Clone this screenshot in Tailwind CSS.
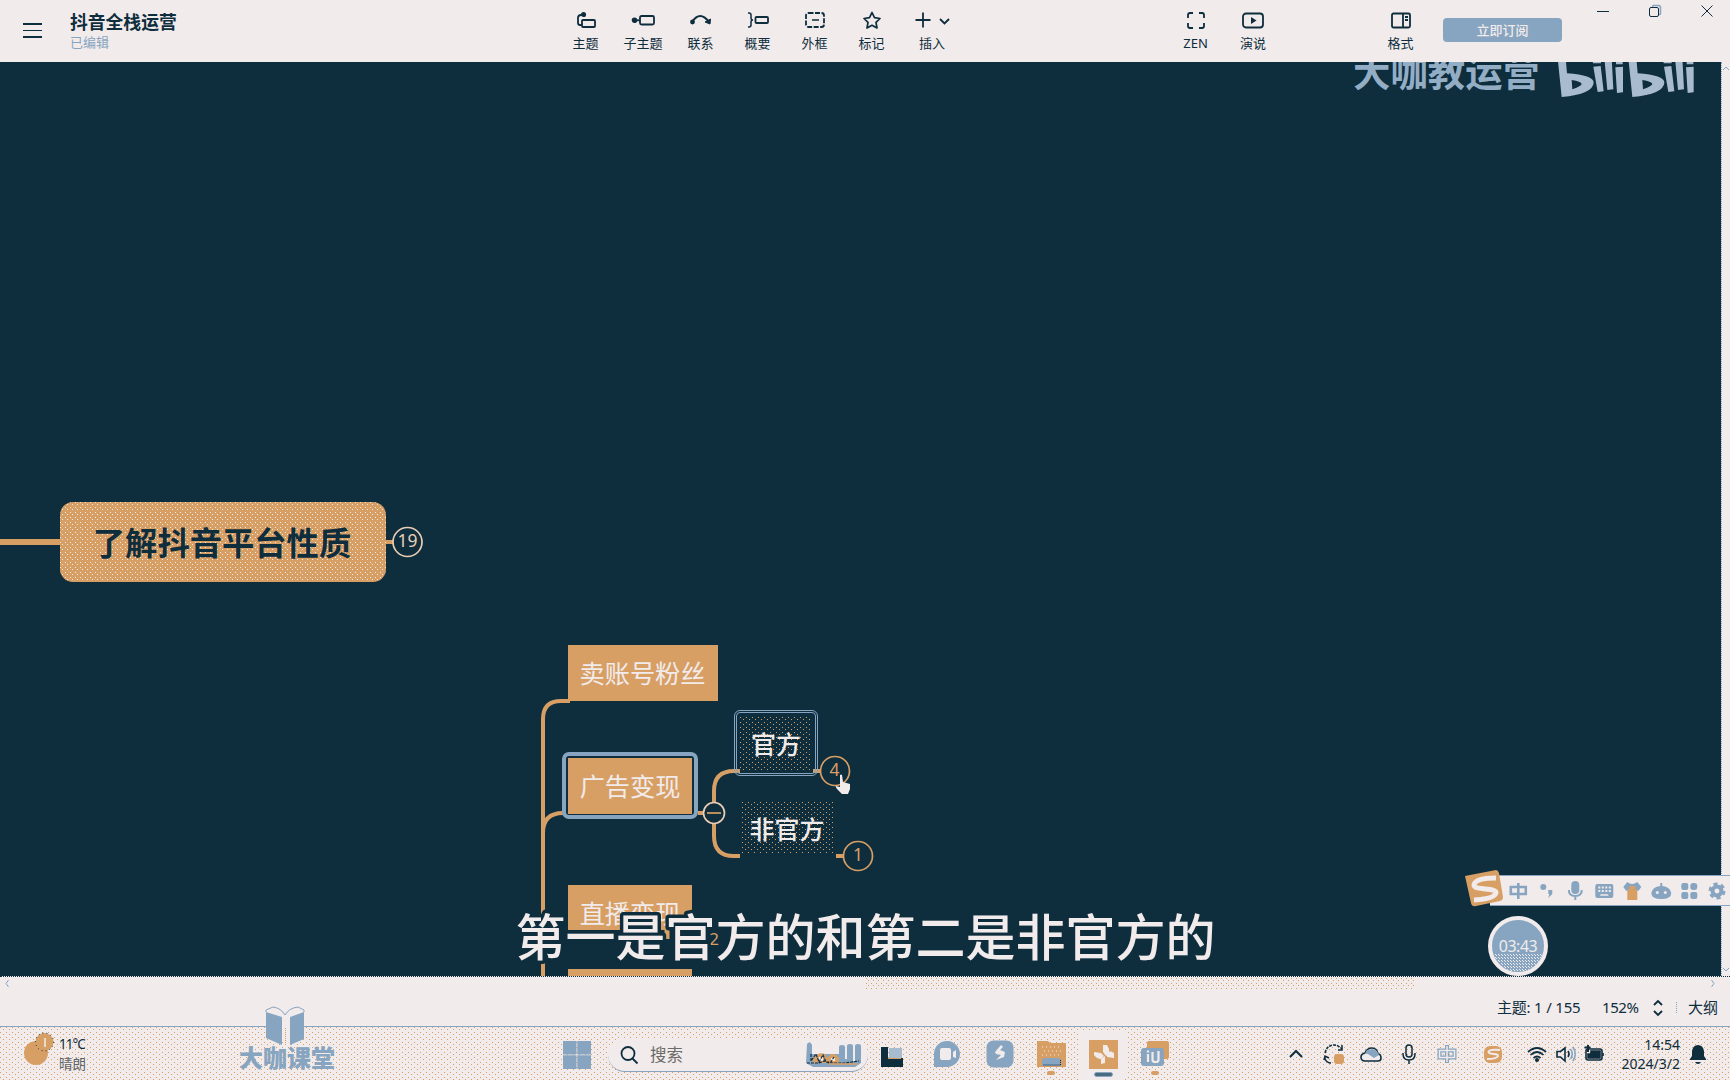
<!DOCTYPE html>
<html lang="zh-CN">
<head>
<meta charset="utf-8">
<title>抖音全栈运营</title>
<script src="https://cdn.jsdelivr.net/npm/@tailwindcss/browser@4"></script>
</head>
<body class="w-[1730px] h-[1080px] overflow-hidden flex flex-col bg-[#f1ebeb] text-[#0e2d3d] font-['Noto_Sans','Noto_Sans_CJK_SC',sans-serif] leading-none">

<!-- Title bar and toolbar -->
<header class="h-[62px] shrink-0 flex items-start">
  <button class="ml-[23px] mt-[23px] w-[19px] shrink-0 flex flex-col gap-[5px]"><i class="block h-[1.5px] w-[19px] bg-[#0e2d3d]"></i><i class="block h-[1.5px] w-[19px] bg-[#0e2d3d]"></i><i class="block h-[2px] w-[19px] bg-[#0e2d3d]"></i></button>
  <div class="ml-[28px] mt-[13px] w-[487px] shrink-0 flex flex-col gap-[4px]">
    <h1 class="text-[17.8px] leading-[19px] font-bold">抖音全栈运营</h1>
    <span class="text-[13px] leading-[13px] text-[#87a5c0]">已编辑</span>
  </div>
  <nav class="shrink-0 flex pt-[9px] text-[13px]">
    <div class="w-[57px] flex flex-col items-center gap-[6px]">
      <svg class="w-6 h-[22px]" viewBox="0 0 24 22" fill="none" stroke="currentColor" stroke-width="1.8"><rect x="8" y="11" width="13" height="7" rx="1"/><path d="M8 16H6q-2 0-2-2V9q0-3 3-3h2"/><circle cx="9.500" cy="5.500" r="1.700" fill="currentColor"/></svg>主题</div>
    <div class="w-[58px] flex flex-col items-center gap-[6px]">
      <svg class="w-6 h-[22px]" viewBox="0 0 24 22" fill="none" stroke="currentColor" stroke-width="1.800"><rect x="9" y="7" width="14" height="8.500" rx="1.500"/><path d="M3 11.300h6"/><circle cx="3.500" cy="11.300" r="1.900" fill="currentColor"/></svg>子主题</div>
    <div class="w-[57px] flex flex-col items-center gap-[6px]">
      <svg class="w-6 h-[22px]" viewBox="0 0 24 22" fill="none" stroke="currentColor" stroke-width="1.800"><path d="M3 13Q11 1 20 13"/><circle cx="3.500" cy="13" r="1.500" fill="currentColor"/><path d="m16 13 5 2 .5-5z" fill="currentColor" stroke-width="1"/></svg>联系</div>
    <div class="w-[57px] flex flex-col items-center gap-[6px]">
      <svg class="w-6 h-[22px]" viewBox="0 0 24 22" fill="none" stroke="currentColor" stroke-width="1.800"><path d="M2 4h1q2 0 2 2v3q0 2 2 2-2 0-2 2v3q0 2-2 2H2" stroke-width="1.500"/><rect x="9.500" y="8" width="12.500" height="6" rx="1"/></svg>概要</div>
    <div class="w-[57px] flex flex-col items-center gap-[6px]">
      <svg class="w-6 h-[22px]" viewBox="0 0 24 22" fill="none" stroke="currentColor" stroke-width="1.800"><rect x="3" y="4" width="18" height="14" rx="2.500" stroke-dasharray="5 1.500"/><path d="M9 11h7" stroke-width="1.500"/></svg>外框</div>
    <div class="w-[57px] flex flex-col items-center gap-[6px]">
      <svg class="w-6 h-[22px]" viewBox="0 0 24 22" fill="none" stroke="currentColor" stroke-width="1.700" stroke-linejoin="round"><path d="m12 3.500 2.500 5.200 5.500.8-4 3.900 1 5.600-5-2.700L7 19l1-5.600-4-3.900 5.500-.8z"/></svg>标记</div>
    <div class="w-[64px] flex flex-col items-center gap-[6px]">
      <svg class="w-9 h-[22px]" viewBox="0 0 36 22" fill="none" stroke="currentColor" stroke-width="1.800"><path d="M9 3.500v15M1.500 11h15M26 10l4.500 4.500L35 10"/></svg>插入</div>
  </nav>
  <nav class="ml-[203px] shrink-0 flex pt-[9px] text-[13px]">
    <div class="w-[57px] flex flex-col items-center gap-[6px]">
      <svg class="w-6 h-[22px]" viewBox="0 0 24 22" fill="none" stroke="currentColor" stroke-width="1.800"><path d="M4 9V6q0-2 2-2h3M15 4h3q2 0 2 2v3M20 14v3q0 2-2 2h-3M9 19H6q-2 0-2-2v-3"/></svg>ZEN</div>
    <div class="w-[58px] flex flex-col items-center gap-[6px]">
      <svg class="w-6 h-[22px]" viewBox="0 0 24 22" fill="none" stroke="currentColor" stroke-width="1.800"><rect x="2" y="4.500" width="20" height="14" rx="3"/><path d="m10 8 5.500 3.500L10 15z" fill="currentColor" stroke="none"/></svg>演说</div>
  </nav>
  <div class="ml-[90px] pt-[9px] w-[57px] shrink-0 flex flex-col items-center gap-[6px] text-[13px]">
    <svg class="w-6 h-[22px]" viewBox="0 0 24 22" fill="none" stroke="currentColor" stroke-width="1.800"><rect x="3" y="4.500" width="18" height="14" rx="1.500"/><path d="M14 4.500v14M16 8h3m-3 3h3"/></svg>格式</div>
  <button class="ml-[14px] mt-[18px] w-[119px] h-6 shrink-0 rounded-[4px] bg-[#87a5c0] text-[#f1ebeb] text-[13px] font-medium leading-6">立即订阅</button>
  <div class="ml-[15px] shrink-0 flex">
    <svg class="w-[52px] h-[22px]" viewBox="0 0 52 22" fill="none" stroke="currentColor"><path d="M20 11.500h12"/></svg>
    <svg class="w-[52px] h-[22px]" viewBox="0 0 52 22" fill="none" stroke="currentColor"><path d="M23.500 7.500V6.500q0-1 1-1h5q2 0 2 2v6q0 1-1 1h-1" stroke="#87a5c0" stroke-width="1.500"/><rect x="20.500" y="7.500" width="9" height="9" rx="1.500"/></svg>
    <svg class="w-[46px] h-[22px]" viewBox="0 0 46 22" fill="none" stroke="currentColor"><path d="m20.500 5.500 11 11m0-11-11 11"/></svg>
  </div>
</header>

<!-- Mind map canvas -->
<main class="h-[914px] shrink-0 relative overflow-hidden">
 <div class="absolute left-0 -top-[62px] w-[1730px] h-[1080px]">
  <div class="absolute left-0 top-[62px] w-[1721px] h-[914px] bg-[#0e2d3d]"></div>
  <svg class="absolute left-0 top-0 w-[1730px] h-[1080px]" viewBox="0 0 1730 1080" fill="none" stroke="#d89f65" stroke-width="4">
    <path d="M0 542h60" stroke-width="6"/><path d="M386 542h7"/>
    <path d="M570 701h-9q-18 0-18 18V976M543 833q0-20 20-20"/>
    <path d="M698 813h6M714 802V791q0-20 20-20h6M714 824v12q0 20 20 20h6M813 771h7M836 856h7"/>
    <path d="M667 929v10" stroke-width="5"/>
    <g stroke-width="1.700" fill="#0e2d3d"><circle cx="407.500" cy="542" r="14.500" stroke="#e9cdb4"/><circle cx="714" cy="813" r="10.500" stroke="#e9cdb4"/><circle cx="835" cy="771" r="14.500"/><circle cx="858" cy="856" r="14.500"/><path d="M707 813h14"/></g>
  </svg>
  <div class="absolute left-[60px] top-[502px] w-[326px] h-[80px] rounded-[13px] bg-[#d89f65] bg-[radial-gradient(circle_at_0.5px_0.5px,#f1ebeb_0.6px,transparent_0.7px),radial-gradient(circle_at_2.5px_2.5px,#f1ebeb_0.6px,transparent_0.7px)] bg-[length:5px_5px] flex items-center justify-center pr-[2px] text-[32.3px] font-bold">了解抖音平台性质</div>
  <div class="absolute left-[392px] top-[526px] w-[31px] h-[30px] flex items-center justify-center text-[17.500px] text-[#e9cdb4]">19</div>
  <div class="absolute left-[568px] top-[645px] w-[150px] h-[56px] bg-[#d89f65] text-[#f1ebeb] flex items-center justify-center pr-[1px] pt-[2px] text-[25.200px]">卖账号粉丝</div>
  <div class="absolute left-[562px] top-[752px] w-[136px] h-[67px] rounded-[7px] border-4 border-[#87a5c0]"></div>
  <div class="absolute left-[568px] top-[758px] w-[124px] h-[56px] bg-[#d89f65] text-[#f1ebeb] flex items-center justify-center pt-[2px] text-[25.200px]">广告变现</div>
  <div class="absolute left-[734px] top-[710px] w-[84px] h-[66px] rounded-[6px] border-[3px] border-double border-[#87a5c0]"></div>
  <div class="absolute left-[740px] top-[717px] w-[72px] h-[54px] bg-[radial-gradient(circle_at_0.5px_0.5px,#d89f65_0.6px,transparent_0.7px),radial-gradient(circle_at_3.5px_2.5px,#d89f65_0.6px,transparent_0.7px)] bg-[length:6px_5px] text-[#f1ebeb] flex items-center justify-center text-[25px] font-medium"><span>官方</span></div>
  <div class="absolute left-[742px] top-[802px] w-[93px] h-[51px] bg-[radial-gradient(circle_at_0.5px_0.5px,#d89f65_0.6px,transparent_0.7px),radial-gradient(circle_at_3.5px_2.5px,#d89f65_0.6px,transparent_0.7px)] bg-[length:6px_5px] text-[#f1ebeb] flex items-center justify-center pr-[3px] pt-[3px] text-[25px] font-medium">非官方</div>
  <div class="absolute left-[820px] top-[755px] w-[29px] h-[30px] flex items-center justify-center text-[17.500px] text-[#d89f65]">4</div>
  <div class="absolute left-[843px] top-[840px] w-[30px] h-[30px] flex items-center justify-center text-[17.500px] text-[#d89f65]">1</div>
  <svg class="absolute left-[834px] top-[773px] w-[18px] h-[22px]" viewBox="0 0 18 22" fill="#f1ebeb"><path d="M6 2q1.500-1 2 0l1 7 7 2v5l-2 5H8l-5-5q-2-3-1-3l4 1z"/></svg>
  <div class="absolute left-[568px] top-[885px] w-[124px] h-[45px] bg-[#d89f65] text-[#f1ebeb] flex items-center justify-center pt-[12px] text-[25.200px]">直播变现</div>
  <div class="absolute left-[568px] top-[969px] w-[124px] h-[10px] bg-[#d89f65]"></div>
  <div class="absolute left-[706px] top-[929px] w-4 h-5 text-center leading-5 text-[17px] text-[#d89f65]">2</div>
  <!-- Video caption with a dark outline -->
  <svg class="absolute left-[500px] top-[895px] w-[730px] h-[81px]" viewBox="0 0 730 81"><text x="15.500" y="60.500" textLength="700" class="text-[50px] font-medium font-['Noto_Sans_CJK_SC',sans-serif]" fill="#f1ebeb" stroke="#0e2d3d" stroke-width="7" stroke-linejoin="round" paint-order="stroke">第一是官方的和第二是非官方的</text></svg>
  <!-- Channel watermark -->
  <div class="absolute left-[1353px] top-[54px] text-[37.400px] leading-[38px] font-bold text-[#93adc5]">大咖教运营</div>
  <svg class="absolute left-[1545px] top-[58px] w-[185px] h-[50px]" viewBox="0 0 555 150"><g id="bili"><path fill-rule="evenodd" d="M38 0h24l4 46q80 6 80 28-2 34-96 43zM80 66l2 28q28-10 28-16-2-8-30-12z" fill="#a9bbce"/><path d="M145 26l22-2 9 76-18 2zM178 0h22l5 94-18 2zM211 28l23-2v77l-18 2zM142 4h26v12h-24zM213 4h20v15h-20z" fill="#a9bbce"/></g><use href="#bili" x="212"/></svg>
  <!-- Timer -->
  <div class="absolute left-[1488px] top-[916px] w-[60px] h-[60px] rounded-full border-4 border-[#f1ebeb] bg-[#87a5c0] overflow-hidden flex items-center justify-center text-[16px] text-[#f1ebeb]">
    <div class="absolute left-0 bottom-0 w-full h-[18px] bg-[radial-gradient(circle_at_0.5px_0.5px,#f1ebeb_0.6px,transparent_0.7px),radial-gradient(circle_at_1.5px_1.5px,#f1ebeb_0.6px,transparent_0.7px)] bg-[length:3px_3px]"></div><span class="relative tracking-[-0.5px]">03:43</span></div>
  <!-- Vertical scrollbar -->
  <div class="absolute left-[1721px] top-[62px] w-[9px] h-[914px] bg-[#f1ebeb] border-l border-dotted border-[#87a5c0]"></div>
  <svg class="absolute left-[1721px] top-[62px] w-[9px] h-[914px]" viewBox="0 0 9 914" fill="none" stroke="#87a5c0"><path d="M2 8l3-3 3 3M2 906l3 3 3-3"/></svg>
  <!-- Input method bar -->
  <div class="absolute left-[1490px] top-[875px] w-[240px] h-[31px] bg-[#f1ebeb] border-y border-[#87a5c0] flex items-center pl-[14px] text-[#87a5c0]">
    <svg class="w-[28.600px] h-6" viewBox="0 0 28 24" fill="none" stroke="currentColor" stroke-width="2.600"><path d="M6.500 8h15v7h-15zM14 4v16"/></svg>
    <svg class="w-[28.600px] h-6" viewBox="0 0 28 24" fill="currentColor"><circle cx="10" cy="8" r="3"/><path d="M15 11h4v4l-4 4 1-4h-1z"/></svg>
    <svg class="w-[28.600px] h-6" viewBox="0 0 28 24" fill="none" stroke="currentColor" stroke-width="2"><rect x="11" y="3" width="6" height="11" rx="3" fill="currentColor"/><path d="M7.500 11q0 6 6.500 6t6.500-6M14 17v4"/></svg>
    <svg class="w-[28.600px] h-6" viewBox="0 0 28 24"><rect x="5" y="5" width="18" height="14" rx="2" fill="#87a5c0"/><path d="M8 8.500h13M8 12h13" stroke="#f1ebeb" stroke-width="2" stroke-dasharray="2 1.500"/><path d="M10 16h8" stroke="#f1ebeb" stroke-width="1.500"/></svg>
    <svg class="w-[28.600px] h-6" viewBox="0 0 28 24"><path d="M9 9h10v12H9z" fill="#d89f65"/><path d="M5 8l4-5q5 4 10 0l4 5-3 4-3-2h-6l-3 2z" fill="#87a5c0"/><path d="M11 7h6v8h-6z" fill="#d89f65"/></svg>
    <svg class="w-[28.600px] h-6" viewBox="0 0 28 24"><path d="M13 4h2v3q8 1 9 7 0 6-10 6T4 14q1-6 9-7z" fill="#87a5c0"/><circle cx="10" cy="13.500" r="1.500" fill="#f1ebeb"/><circle cx="18" cy="13.500" r="1.500" fill="#f1ebeb"/></svg>
    <svg class="w-[28.600px] h-6" viewBox="0 0 28 24" fill="currentColor"><rect x="6" y="4" width="7" height="7" rx="2"/><rect x="15" y="4" width="7" height="7" rx="3"/><rect x="6" y="13" width="7" height="7" rx="2"/><rect x="15" y="13" width="7" height="7" rx="2"/></svg>
    <svg class="w-[26px] h-6" viewBox="1 0 26 24" fill="none" stroke="currentColor"><circle cx="14" cy="12" r="4.500" stroke-width="4"/><circle cx="14" cy="12" r="7" stroke-width="3" stroke-dasharray="4 3.330"/></svg>
  </div>
  <svg class="absolute left-[1463px] top-[868px] w-[42px] h-[40px]" viewBox="0 0 42 40"><path d="M2 8 33 2q2 0 3 3l4 24q0 3-3 4L13 38q-4 1-5-3z" fill="#d89f65"/><path d="M33 10Q12 10 11 17c0 6 23 2 22 8q-2 6-22 7" fill="none" stroke="#f1ebeb" stroke-width="5"/></svg>
 </div>
</main>

<!-- Horizontal scrollbar and status bar -->
<section class="h-[50px] shrink-0 border-t border-dotted border-[#0e2d3d]">
  <div class="h-[13px] flex items-center justify-between pl-[5px] pr-[15px] text-[#87a5c0]">
    <svg class="w-1 h-[9px]" viewBox="0 0 4 9" fill="none" stroke="currentColor"><path d="M3.500 1 1 4.500 3.500 8"/></svg>
    <div class="ml-[857px] mr-auto w-[549px] h-[11px] bg-[radial-gradient(circle_at_0.5px_0.5px,#d89f65_0.6px,transparent_0.7px),radial-gradient(circle_at_2.5px_2.5px,#d89f65_0.6px,transparent_0.7px)] bg-[length:5px_5px]"></div>
    <svg class="w-1 h-[9px]" viewBox="0 0 4 9" fill="none" stroke="currentColor"><path d="M.5 1 3 4.500.5 8"/></svg>
  </div>
  <div class="h-[35px] flex items-center pl-[1497px] text-[15px] whitespace-nowrap">
    <span class="w-[105px] tracking-[-0.2px]">主题: 1 / 155</span><span class="w-[49px] tracking-[-0.400px]">152%</span>
    <svg class="w-[14px] h-[18px]" viewBox="0 0 14 18" fill="none" stroke="currentColor" stroke-width="1.800"><path d="m3 6 4-4 4 4M3 12l4 4 4-4"/></svg>
    <i class="ml-[11px] h-[11px] border-l border-dotted border-[#87a5c0]"></i><span class="ml-[11px]">大纲</span>
  </div>
</section>

<!-- Taskbar -->
<footer class="h-[54px] shrink-0 border-t border-[#87a5c0] bg-[radial-gradient(circle_at_0.5px_0.5px,#d89f65_0.6px,transparent_0.7px),radial-gradient(circle_at_3.5px_2.5px,#d89f65_0.6px,transparent_0.7px)] bg-[length:6px_5px] flex items-start">
  <svg class="ml-[22px] mt-[4px] w-[36px] h-[36px]" viewBox="0 0 36 36"><circle cx="14" cy="22" r="12" fill="#d89f65"/><circle cx="22.500" cy="11" r="9" fill="#d89f65" stroke="#0e2d3d" stroke-dasharray="1 3"/><path d="M23 7v9" stroke="#f1ebeb" stroke-width="1.500"/></svg>
  <div class="ml-[1px] mt-[11px] w-[180px] flex flex-col gap-[6px] text-[13.500px]"><span class="tracking-[-1px]">11°C</span><span class="text-[#5b6469]">晴朗</span></div>
  <div class="-mt-[21px] w-[96px] flex flex-col items-center text-[#87a5c0]">
    <svg class="mr-[5px] w-[40px] h-[40px]" viewBox="0 0 40 40"><path d="M1 4 7 1q10 1 12 8Q22 1 33 1l5 3v28l-13 6-5-4-5 4-14-6z" fill="#f1ebeb"/><path d="M1 6 17 11v28L1 32zM39 6 25 11v28l14-6z" fill="currentColor"/><path d="M1 6 1 4 8 1q8 1 12 8Q24 2 33 1l6 3v2" fill="none" stroke="currentColor"/><path d="M20.500 22v18" stroke="#d89f65" stroke-dasharray="1 1"/></svg>
    <strong class="text-[24px] leading-[24px] font-black whitespace-nowrap">大咖课堂</strong>
  </div>
  <svg class="ml-[227px] mt-[13px] w-[30px] h-[30px]" viewBox="0 0 30 30" fill="#87a5c0"><path d="M1 1h13.500v13.500H1zM15.300 1h13.700v13.500H15.300zM1 15.300h13.500v13.700H1zM15.300 15.300h13.700v13.700H15.300z"/></svg>
  <div class="ml-[16px] mt-[11px] w-[260px] h-[34px] rounded-[17px] bg-[#f1ebeb] border-b border-[#87a5c0] flex items-center pl-[11px] pr-[7px] pt-[1px] text-[16.500px] text-[#6d6c69]">
    <svg class="w-5 h-5 text-[#0e2d3d]" viewBox="0 0 20 20" fill="none" stroke="currentColor" stroke-width="1.800"><circle cx="9" cy="8.500" r="6.500"/><path d="m13.500 13.500 5 5"/></svg>
    <span class="ml-[11px]">搜索</span>
    <svg class="ml-auto w-[56px] h-[28px]" viewBox="0 0 56 28"><path d="M2 3q3-4 5 1v9h27V6q0-2 3-2t3 2v12h2V5q0-2 3-2t3 2v15h2V5q0-2 3-2t3 2v17l-6 4H8l-7-4z" fill="#87a5c0"/><path d="M8 18q5-8 12-5l2 4q6-8 12 0v5H8z" fill="#d89f65"/><path d="M14 20v-4h4v4zM26 20v-3h4v3z" fill="#f1ebeb"/><path d="M6 13v7l5-7 3 8 4-7 3 7h5l3-5M2 22h12l5-2 5 2h16l14-2" fill="none" stroke="#0e2d3d" stroke-width="1.200" stroke-dasharray="3 1"/><path d="M24 23h28" stroke="#d89f65" stroke-width="1.500"/></svg>
  </div>
  <svg class="ml-[9px] mt-[19px] w-[30px] h-[24px]" viewBox="0 0 30 24"><path d="M4 1h7v11h15v9H4z" fill="#0e2d3d"/><path d="M12 2h13v10H12z" fill="#a8bcd0"/><path d="M11 12.500h13" stroke="#d89f65"/></svg>
  <svg class="ml-[25px] mt-[12px] w-[30px] h-[30px]" viewBox="0 0 30 30"><path d="M2 28V14a13 13 0 1 1 13 14z" fill="#87a5c0"/><rect x="8" y="9" width="11" height="12" rx="2" fill="#f1ebeb"/><path d="M21 13l3-2v8l-3-1z" fill="#f1ebeb"/></svg>
  <svg class="ml-[23px] mt-[12px] w-[30px] h-[30px]" viewBox="0 0 30 30"><rect x="1.500" y="1.500" width="27" height="27" rx="7" fill="#87a5c0"/><path d="m16 6-6 7 1 2 5 1-5 5 8-3 1-5-5-2 3-3z" fill="#f1ebeb"/></svg>
  <div class="ml-[20px] mt-[12px] w-[32px] flex flex-col items-center gap-[2px]">
    <svg class="w-[32px] h-[30px]" viewBox="0 0 32 30"><path d="M2 2h11l2 2h16v24H2z" fill="#d89f65"/><path d="M7 8h20M9 12h18M7 16h20" stroke="#f1ebeb" stroke-dasharray="1 3"/><path d="M7 27v-6l2-2h15l2 2v6z" fill="#87a5c0"/><path d="M25.500 21v5H8" fill="none" stroke="#0e2d3d" stroke-dasharray="1 1"/></svg>
    <i class="block w-2 h-1 rounded-full bg-[#d89f65]"></i>
  </div>
  <div class="ml-[12px] mt-[3px] w-[48px] h-[50px] rounded-[5px] bg-[#f1ebeb] flex flex-col items-center pt-[10px] gap-[3px]">
    <svg class="w-[29px] h-[29px]" viewBox="0 0 29 29"><path d="M0 0h29v29H0z" fill="#d89f65"/><path d="M14 5h4l2 4v5l-3 2-3-4zM18 15l3-4 4 2v5l-7-1zM5 12l7 1 3 3-3 3q-4 0-7-4zM12 19l4-3v7l-4 1z" fill="#f1ebeb"/></svg>
    <i class="block w-[19px] h-[5px] rounded-full bg-[#4b6a80] border border-[#87a5c0]"></i>
  </div>
  <div class="ml-[12px] mt-[12px] w-[32px] flex flex-col items-center gap-[2px]">
    <svg class="w-[32px] h-[30px]" viewBox="0 0 32 30"><rect x="8" y="2" width="22" height="18" rx="2" fill="#d89f65"/><rect x="2" y="9" width="23" height="18" rx="3" fill="#87a5c0"/><path d="M9 15v8M13.500 13v8q0 2 3 2t3-2v-9M9 11.500v2" fill="none" stroke="#f1ebeb" stroke-width="2.200"/></svg>
    <i class="block w-2 h-1 rounded-full bg-[#d89f65]"></i>
  </div>
  <div class="ml-[113px] h-[54px] flex items-center">
    <svg class="w-[24px] h-6" viewBox="0 0 24 24" fill="none" stroke="currentColor" stroke-width="2"><path d="m6 15 6-6 6 6"/></svg>
    <svg class="ml-[14px] w-[24px] h-6" viewBox="0 0 24 24" fill="none" stroke="currentColor" stroke-width="1.500"><path d="M3 11Q5 3 12 3q4 0 8 4" stroke-dasharray="3 1"/><path d="M20 3v5h-4M3 14v3q2 4 6 4M2 18l1-4 4 2"/><rect x="12" y="12" width="10" height="10" rx="3" fill="#d89f65" stroke="none"/></svg>
    <svg class="ml-[13px] w-[24px] h-6" viewBox="0 0 24 24" stroke="currentColor" stroke-width="1.600"><path d="M6 19q-4 0-4-4 0-3 4-4 2-5 7-5t6 6q3 0 3 4 0 3-3 3z" fill="#f1ebeb"/><path d="M5 13q2-2 4-1l6 4 5-3-2-4-4-2-6 1z" fill="#87a5c0" stroke="none"/></svg>
    <svg class="ml-[14px] w-[24px] h-6" viewBox="0 0 24 24" fill="none" stroke="currentColor" stroke-width="1.500"><rect x="9" y="3" width="6" height="12" rx="3"/><path d="M6 11v1q0 6 6 6t6-6v-1M12 18v4"/></svg>
    <svg class="ml-[14px] w-[24px] h-6" viewBox="0 0 24 24" fill="none"><path d="M4.500 8.500h15v7h-15zM12 3v18" stroke="#87a5c0" stroke-width="4"/><path d="M4.500 8.500h15v7h-15zM12 4v16" stroke="#f1ebeb" stroke-width="1.500"/></svg>
    <svg class="ml-[22px] w-[24px] h-6" viewBox="0 0 24 24" fill="none"><rect x="3" y="4" width="18" height="17" rx="6" fill="#d89f65"/><path d="M19 8Q8 7 7.500 10c0 3 10 1 9.500 4q-1 3-11 3" stroke="#f1ebeb" stroke-width="2"/></svg>
    <svg class="ml-[20px] w-[24px] h-6" viewBox="0 0 24 24" fill="none" stroke="currentColor" stroke-width="1.700"><path d="M3 10q9-8 18 0M5.500 13q6.500-6 13 0M8.500 16q3.500-3 7 0"/><circle cx="12" cy="18" r="1.200" fill="currentColor"/></svg>
    <svg class="ml-[5px] w-[24px] h-6" viewBox="0 0 24 24" fill="none" stroke="currentColor" stroke-width="1.600"><path d="M3 9.500h3.500L11 6v13l-4.500-4H3zM14 9q2 3 0 6"/><path d="M16.500 7q3.500 5 0 10M19 5q4.500 7 0 14" stroke="#87a5c0"/></svg>
    <svg class="ml-[4px] w-[24px] h-6" viewBox="0 0 24 24" fill="none" stroke="currentColor" stroke-width="1.600"><rect x="4" y="7" width="16" height="11" rx="2"/><path d="M9 9h9v7H6v-4h3zM21 11v3" fill="currentColor"/><path d="M6 3v7M2.500 5.500h6" stroke-width="2"/></svg>
    <div class="ml-[8px] w-[66px] flex flex-col items-end gap-[5px] text-[14px]"><span>14:54</span><span>2024/3/2</span></div>
    <svg class="ml-[6px] w-[24px] h-6" viewBox="0 0 24 24" fill="currentColor"><path d="M4 18v-1l2-3V9q1-6 6-6t6 6v5l2 3v1z"/><path d="M9 20h6q-1 2-3 2t-3-2z"/></svg>
  </div>
</footer>
</body>
</html>
